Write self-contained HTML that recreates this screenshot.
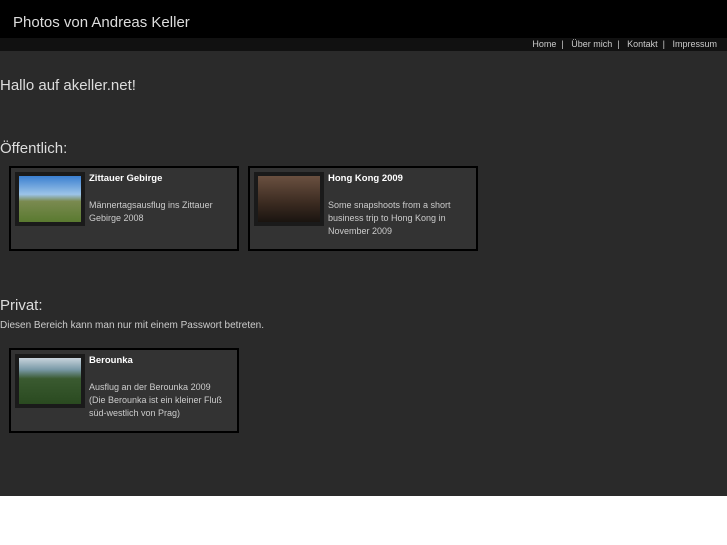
<!DOCTYPE html>
<html><head><meta charset="utf-8"><style>
body{margin:0;width:727px;height:545px;background:#fff;font-family:"Liberation Sans",sans-serif;position:relative;overflow:hidden}
.hd{position:absolute;left:0;top:0;width:727px;height:38px;background:#000}
.hd span{position:absolute;left:13px;top:14px;color:#ddd;font-size:15px}
.nav{position:absolute;left:0;top:38px;width:727px;height:13px;background:#111;color:#ccc;font-size:9px}
.nav span{position:absolute;right:10px;top:1px;white-space:pre}
.main{position:absolute;left:0;top:51px;width:727px;height:445px;background:#2a2a2a}
.t{position:absolute;left:0;color:#ddd;font-size:15px}
.s{position:absolute;left:0;color:#ccc;font-size:10px}
.card{position:absolute;width:226px;height:81px;background:#333;border:2px solid #000}
.th{position:absolute;left:4px;top:4px;width:70px;height:54px;background:#1a1a1a}
.im{position:absolute;left:4px;top:4px;width:62px;height:46px}
.ti{position:absolute;left:78px;top:5px;color:#fff;font-size:9.5px;font-weight:bold}
.de{position:absolute;left:78px;top:31px;width:140px;color:#ccc;font-size:9px;line-height:13px}
</style></head><body>
<div class="hd"><span>Photos von Andreas Keller</span></div>
<div class="nav"><span>Home  |   Über mich  |   Kontakt  |   Impressum</span></div>
<div class="main">
<div class="t" style="top:26px">Hallo auf akeller.net!</div>
<div class="t" style="top:89px">Öffentlich:</div>
<div class="card" style="left:9px;top:115px"><div class="th"><div class="im" style="background:linear-gradient(#3a7fd0 0%,#9cc4e8 40%,#7a8a50 55%,#5a7a30 100%)"></div></div><div class="ti">Zittauer Gebirge</div><div class="de">Männertagsausflug ins Zittauer Gebirge 2008</div></div>
<div class="card" style="left:248px;top:115px"><div class="th"><div class="im" style="background:linear-gradient(#6a5040,#3a2a20 60%,#1a1410)"></div></div><div class="ti">Hong Kong 2009</div><div class="de">Some snapshoots from a short business trip to Hong Kong in November 2009</div></div>
<div class="t" style="top:246px">Privat:</div>
<div class="s" style="top:269px">Diesen Bereich kann man nur mit einem Passwort betreten.</div>
<div class="card" style="left:9px;top:297px"><div class="th"><div class="im" style="background:linear-gradient(#c8d4dc 0%,#7a9aa8 25%,#3a5a30 45%,#2a4a20 100%)"></div></div><div class="ti">Berounka</div><div class="de">Ausflug an der Berounka 2009<br>(Die Berounka ist ein kleiner Fluß süd-westlich von Prag)</div></div>
</div>
</body></html>
